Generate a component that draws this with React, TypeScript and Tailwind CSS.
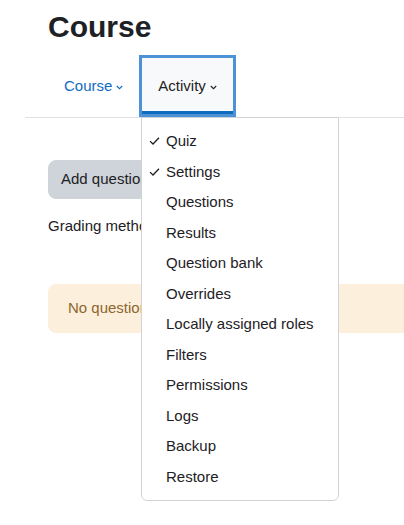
import React from 'react';

const FONT = { fontFamily: '"Liberation Sans", Arial, sans-serif' };

const MENU_ITEMS: { label: string; checked?: boolean }[] = [
  { label: 'Quiz', checked: true },
  { label: 'Settings', checked: true },
  { label: 'Questions' },
  { label: 'Results' },
  { label: 'Question bank' },
  { label: 'Overrides' },
  { label: 'Locally assigned roles' },
  { label: 'Filters' },
  { label: 'Permissions' },
  { label: 'Logs' },
  { label: 'Backup' },
  { label: 'Restore' },
];

const Chevron = () => (
  <svg width="7" height="5" viewBox="0 0 7 5" className="ml-[4px] mt-[2px]" fill="none">
    <path d="M0.8 1 L3.5 3.7 L6.2 1" stroke="currentColor" strokeWidth="1.1" />
  </svg>
);

const Check = () => (
  <svg width="11" height="9" viewBox="0 0 11 9" fill="none" className="absolute left-[7px] top-1/2 -translate-y-1/2">
    <path d="M1 4.6 L4 7.5 L10 1.2" stroke="#1d2125" strokeWidth="1.3" />
  </svg>
);

export default function App() {
  return (
    <div className="w-full h-[525px] overflow-hidden bg-white text-[#1d2125]" style={FONT}>
      <h1 className="pl-12 pt-[9px] text-[30px] leading-[36px] font-bold">Course</h1>

      <div className="relative mt-[10px]">
        {/* secondary navigation */}
        <nav className="ml-[25px] flex border-b border-[#dee2e6] pl-[20px] text-[15px] leading-[22px]">
          <a className="flex items-center h-[62px] pl-[19px] pr-4 text-[#0f6cbf]">
            Course
            <Chevron />
          </a>
          <a className="relative flex items-center h-[62px] border-[3px] border-[#4d91d6] bg-[#f8f9fa] px-4 text-[#1d2125]">
            Activity
            <Chevron />
            <span className="absolute left-0 right-0 bottom-0 h-[3px] bg-[#0f6cbf]" />
          </a>
        </nav>

        {/* page content */}
        <div className="pl-12 text-[15px] leading-[22.5px]">
          <button className="mt-[42px] rounded-lg border border-[#ced4da] bg-[#ced4da] px-3 py-[7px] text-[#1d2125] whitespace-nowrap">
            Add question
          </button>
          <p className="mt-[16px]">Grading method: Highest grade</p>
          <div className="mt-[47px] rounded-l-lg border border-[#fcefdc] bg-[#fcefdc] px-[19px] py-3 text-[#8e662e]">
            No questions have been added yet
          </div>
        </div>

        {/* open dropdown */}
        <div className="absolute left-[141px] top-[62px] w-[198px] rounded-b-md border border-[#d1d4d7] bg-white py-2 text-[15px] leading-[22.5px]">
          {MENU_ITEMS.map((item) => (
            <div key={item.label} className="relative py-1 pl-6 pr-4 whitespace-nowrap">
              {item.checked && <Check />}
              {item.label}
            </div>
          ))}
        </div>
      </div>
    </div>
  );
}
